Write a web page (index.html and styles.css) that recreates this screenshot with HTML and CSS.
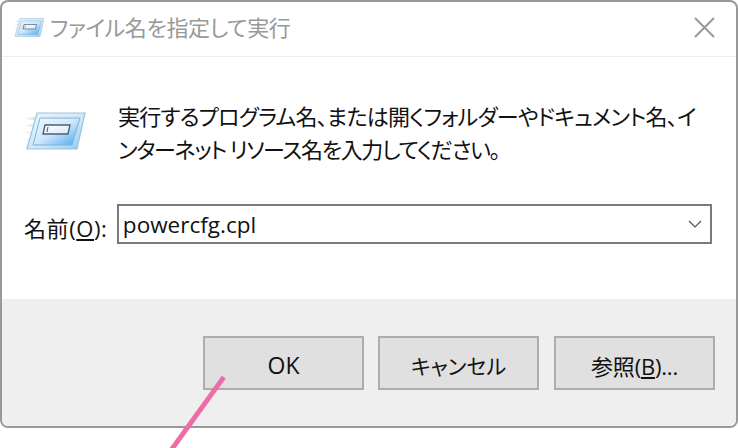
FILE: index.html
```html
<!DOCTYPE html>
<html lang="ja">
<head>
<meta charset="utf-8">
<title>ファイル名を指定して実行</title>
<link rel="stylesheet" href="styles.css">
</head>
<body>
<div class="window">
  <header class="titlebar">
    <svg class="title-icon" width="30" height="20" viewBox="0 0 60 40">
      <use href="#run"/>
    </svg>
    <span class="title">ファイル名を指定して実行</span>
    <svg class="close" width="21" height="21" viewBox="0 0 21 21"><path d="M1 1 L20 20 M20 1 L1 20" stroke="#999" stroke-width="2" fill="none"/></svg>
  </header>
  <main class="content">
    <div class="message">
      <svg class="run-icon" width="62" height="40" viewBox="0 0 60 40">
        <defs>
          <linearGradient id="body" x1="0" y1="0" x2="1" y2="1">
            <stop offset="0" stop-color="#edf6fd"/><stop offset="0.6" stop-color="#cbe5f8"/><stop offset="1" stop-color="#8cc8f2"/>
          </linearGradient>
          <linearGradient id="field" x1="0" y1="0" x2="1" y2="1">
            <stop offset="0" stop-color="#ffffff"/><stop offset="1" stop-color="#d7e9fb"/>
          </linearGradient>
          <linearGradient id="inner" x1="0" y1="0" x2="1" y2="1">
            <stop offset="0" stop-color="#f2f8fe"/><stop offset="0.5" stop-color="#cfe6fa"/><stop offset="1" stop-color="#45a6ef"/>
          </linearGradient>
          <linearGradient id="streak" x1="0" y1="0" x2="1" y2="0">
            <stop offset="0" stop-color="#e6f2fb" stop-opacity="0.3"/><stop offset="1" stop-color="#b9dbf5"/>
          </linearGradient>
          <g id="run">
            <path d="M0 5h13v3H0zM2 12h10v3H2zM0 19h10v3H0zM2 26h7v3H2zM1 32h6v3H1z" fill="url(#streak)"/>
            <path d="M12 1 H60 L52 37 H2 Z" fill="url(#body)" stroke="#9cc3dd" stroke-width="1.2"/>
            <path d="M15 6 H55 L47 33 H8 Z" fill="url(#inner)" stroke="#7db4dc" stroke-width="1"/>
            <path d="M20 13 H45 L43 22 H18 Z" fill="url(#field)" stroke="#46627a" stroke-width="1.4"/>
            <path d="M23 15 L22 20" stroke="#555" stroke-width="1"/>
          </g>
        </defs>
        <use href="#run"/>
      </svg>
      <p class="message-text">実行するプログラム名、または開くフォルダーやドキュメント名、イ<br><span class="line-two">ンターネット リソース名を入力してください。</span></p>
    </div>
    <div class="field-row">
      <label class="field-label">名前(<u>O</u>):</label>
      <div class="combo">
        <span class="combo-value">powercfg.cpl</span>
        <svg class="chevron" width="14" height="8" viewBox="0 0 14 8"><path d="M1 1 L7 7 L13 1" stroke="#555" stroke-width="1.2" fill="none"/></svg>
      </div>
    </div>
  </main>
  <footer class="actions">
    <button class="btn btn-ok">OK</button>
    <button class="btn">キャンセル</button>
    <button class="btn btn-browse">参照(<u>B</u>)...</button>
  </footer>
</div>
<div class="pointer"></div>
</body>
</html>
```

FILE: styles.css
```css
* { box-sizing: border-box; }
html, body { margin: 0; padding: 0; }
body {
  width: 738px;
  height: 448px;
  background: #fff;
  overflow: hidden;
  position: relative;
  font-family: "Open Sans", "Noto Sans CJK JP", sans-serif;
  color: #111;
}
.window {
  width: 738px;
  height: 428px;
  border: 2px solid #999;
  border-radius: 8px;
  display: flex;
  flex-direction: column;
  overflow: hidden;
  background: #fff;
}
.titlebar {
  height: 55px;
  flex: none;
  display: flex;
  align-items: center;
  padding: 0 21px 3px 12px;
  border-bottom: 1px solid #eee;
}
.title-icon { flex: none; }
.title {
  flex: 1;
  margin-left: 6px;
  padding-bottom: 3px;
  font-size: 22px;
  color: #999;
  font-feature-settings: "palt";
  font-family: "Noto Sans CJK JP", sans-serif;
  letter-spacing: -0.35px;
}
.close { flex: none; }
.content {
  flex: 1;
  padding: 42px 24px 0 22px;
}
.message { display: flex; align-items: flex-start; }
.run-icon { flex: none; margin-top: 13px; }
.message-text {
  margin: 0 0 0 32px;
  font-family: "Noto Sans CJK JP", sans-serif;
  font-size: 22px;
  line-height: 33px;
  letter-spacing: -0.75px;
  white-space: nowrap;
  font-feature-settings: "palt";
}
.line-two { letter-spacing: -1.3px; }
.field-row {
  display: flex;
  align-items: center;
  margin-top: 39px;
}
.field-label {
  width: 93px;
  font-size: 22px;
  letter-spacing: 0.6px;
  white-space: nowrap;
  padding-top: 5px;
}
.combo {
  width: 596px;
  height: 40px;
  border: 2px solid #7a7a7a;
  display: flex;
  align-items: center;
  justify-content: space-between;
  padding: 0 8px 0 4px;
}
.combo-value { font-size: 22.5px; }
.actions {
  height: 127px;
  flex: none;
  background: #efefef;
  display: flex;
  justify-content: flex-end;
  align-items: flex-start;
  gap: 14px;
  padding: 37px 21px 0 0;
}
.actions .btn:last-child { margin-left: 1px; }
.btn {
  width: 161px;
  height: 54px;
  background: #e0e0e0;
  border: 2px solid #adadad;
  font-family: "Open Sans", "Noto Sans CJK JP", sans-serif;
  font-size: 21px;
  color: #111;
  font-feature-settings: "palt";
  padding: 3px 0 0;
}
.btn-ok { font-size: 23px; }
.btn-browse { font-size: 22px; font-feature-settings: normal; letter-spacing: -0.2px; }
.pointer {
  position: absolute;
  left: 224px;
  top: 375px;
  width: 90px;
  height: 4.5px;
  background: #ec6ea6;
  transform-origin: 0 50%;
  transform: rotate(125.8deg);
}
```
